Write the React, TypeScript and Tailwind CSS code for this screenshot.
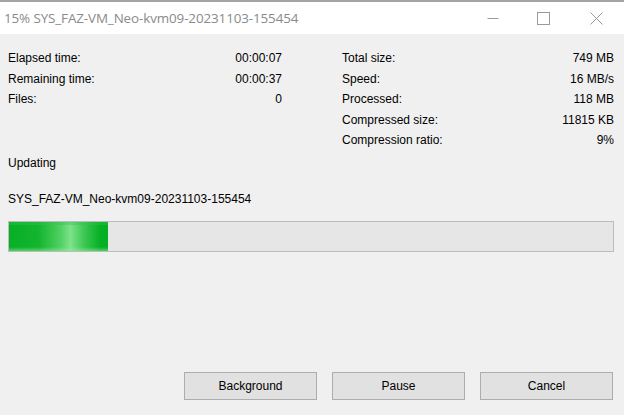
import React from "react";

const left = [
  ["Elapsed time:", "00:00:07"],
  ["Remaining time:", "00:00:37"],
  ["Files:", "0"],
];

const right = [
  ["Total size:", "749 MB"],
  ["Speed:", "16 MB/s"],
  ["Processed:", "118 MB"],
  ["Compressed size:", "11815 KB"],
  ["Compression ratio:", "9%"],
];

function Row({ label, value }: { label: string; value: string }) {
  return (
    <div className="flex justify-between h-[20.5px] leading-[20.5px]">
      <span>{label}</span>
      <span>{value}</span>
    </div>
  );
}

function Btn({ children }: { children: React.ReactNode }) {
  return (
    <button className="w-[133px] h-[28px] border border-[#adadad] bg-[#e1e1e1] text-[12px] text-black leading-none">
      {children}
    </button>
  );
}

export default function App() {
  return (
    <div className="w-[624px] h-[415px] bg-[#f0f0f0] flex flex-col overflow-hidden font-['Liberation_Sans',Arial,sans-serif] text-[12px] text-black">
      {/* title bar */}
      <div className="h-[34px] bg-white border-t-2 border-[#a3a3a3] flex items-center shrink-0">
        <div className="pl-[4px] flex-1 text-[13.4px] text-[#8a8a8a] font-['Open_Sans',sans-serif] tracking-[-0.1px]">
          15% SYS_FAZ-VM_Neo-kvm09-20231103-155454
        </div>
        <div className="flex items-center h-full">
          <div className="w-[46px] flex justify-center">
            <svg width="12" height="12" viewBox="0 0 12 12">
              <path d="M0.5 6.5h11" stroke="#9a9a9a" strokeWidth="1" />
            </svg>
          </div>
          <div className="w-[54px] flex justify-center">
            <svg width="13" height="13" viewBox="0 0 13 13">
              <rect x="0.5" y="0.5" width="12" height="12" fill="none" stroke="#9a9a9a" strokeWidth="1" />
            </svg>
          </div>
          <div className="w-[54px] flex justify-center pr-[2px]">
            <svg width="13" height="13" viewBox="0 0 13 13">
              <path d="M0.5 0.5l12 12M12.5 0.5l-12 12" stroke="#9a9a9a" strokeWidth="1" />
            </svg>
          </div>
        </div>
      </div>

      {/* body */}
      <div className="flex-1 flex flex-col pl-[8px] pr-[10px] pt-[14px]">
        <div className="flex">
          <div className="w-[274px]">
            {left.map(([l, v]) => (
              <Row key={l} label={l} value={v} />
            ))}
          </div>
          <div className="ml-[60px] flex-1">
            {right.map(([l, v]) => (
              <Row key={l} label={l} value={v} />
            ))}
          </div>
        </div>

        <div className="mt-[2px] h-[20px] leading-[20px]">Updating</div>
        <div className="mt-[16px] h-[20px] leading-[20px]">SYS_FAZ-VM_Neo-kvm09-20231103-155454</div>

        <div className="mt-[12px] h-[31px] border border-[#bcbcbc] bg-[#e6e6e6] relative">
          <div className="h-full w-[99px] bg-[linear-gradient(90deg,#06b025_0%,#14b52f_30%,#4fd062_52%,#7de38a_62%,#3cc752_76%,#06b025_92%,#06b025_100%)] relative">
            <div className="absolute inset-x-0 top-0 h-[3px] bg-[#37c150]/40" />
            <div className="absolute inset-x-0 bottom-0 h-[4px] bg-gradient-to-b from-transparent to-[#9df0a6]/50" />
          </div>
        </div>

        <div className="mt-auto mb-[15px] flex justify-end gap-[15px] pr-[1px]">
          <Btn>Background</Btn>
          <Btn>Pause</Btn>
          <Btn>Cancel</Btn>
        </div>
      </div>
    </div>
  );
}
